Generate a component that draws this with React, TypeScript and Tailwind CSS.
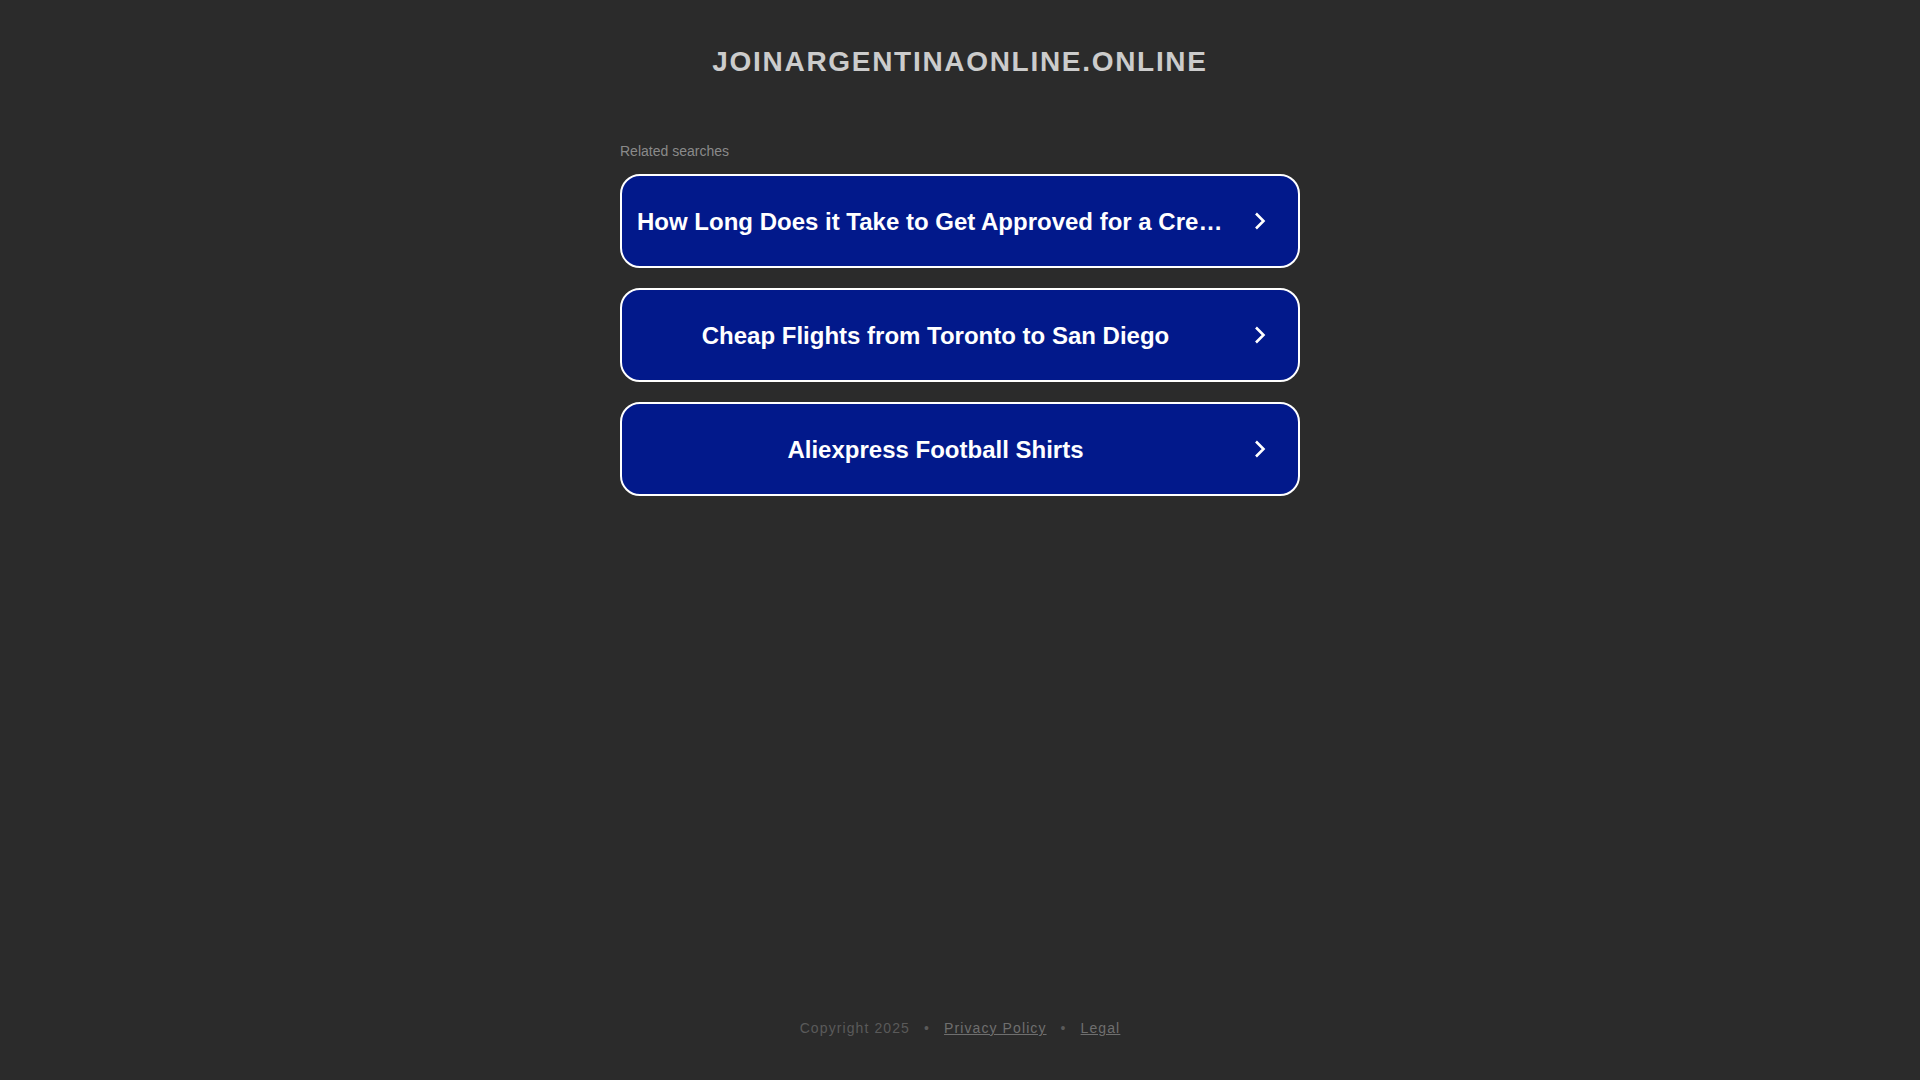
import React from "react";

const items = [
  "How Long Does it Take to Get Approved for a Credit Card",
  "Cheap Flights from Toronto to San Diego",
  "Aliexpress Football Shirts",
];

function Chevron() {
  return (
    <svg width="12" height="18" viewBox="0 0 12 18" className="ml-[20px] shrink-0" aria-hidden="true">
      <path d="M2 1.5 L9.5 9 L2 16.5" fill="none" stroke="#ffffff" strokeWidth="2.6" strokeLinecap="butt" strokeLinejoin="miter" />
    </svg>
  );
}

export default function App() {
  return (
    <div
      className="min-h-screen bg-[#2b2b2b] flex flex-col items-center"
      style={{ fontFamily: '"Liberation Sans", Arial, sans-serif' }}
    >
      <h1 className="mt-[48px] text-[28px] leading-[28px] font-bold tracking-[1.7px] text-[#cccccc]">
        JOINARGENTINAONLINE.ONLINE
      </h1>

      <div className="w-[680px] mt-[65px]">
        <p className="text-[14px] leading-[20px] text-[#8a8a8a]">Related searches</p>
        <div className="mt-[13px] flex flex-col gap-[20px]">
          {items.map((t) => (
            <a
              key={t}
              href="#"
              className="flex items-center h-[94px] rounded-[20px] border-2 border-white bg-[#02198b] pl-[15px] pr-[32px] text-white"
            >
              <span className="flex-1 min-w-0 truncate text-center text-[24px] leading-[30px] font-bold pt-[2px]">
                {t}
              </span>
              <Chevron />
            </a>
          ))}
        </div>
      </div>

      <footer className="mt-auto pb-[42px] text-[14px] leading-[20px] tracking-[1.1px] text-[#5a5a5a] flex items-center">
        <span>Copyright 2025</span>
        <span className="mx-[14px]">•</span>
        <a href="#" className="underline text-[#6f6f6f]">Privacy Policy</a>
        <span className="mx-[14px]">•</span>
        <a href="#" className="underline text-[#6f6f6f]">Legal</a>
      </footer>
    </div>
  );
}
